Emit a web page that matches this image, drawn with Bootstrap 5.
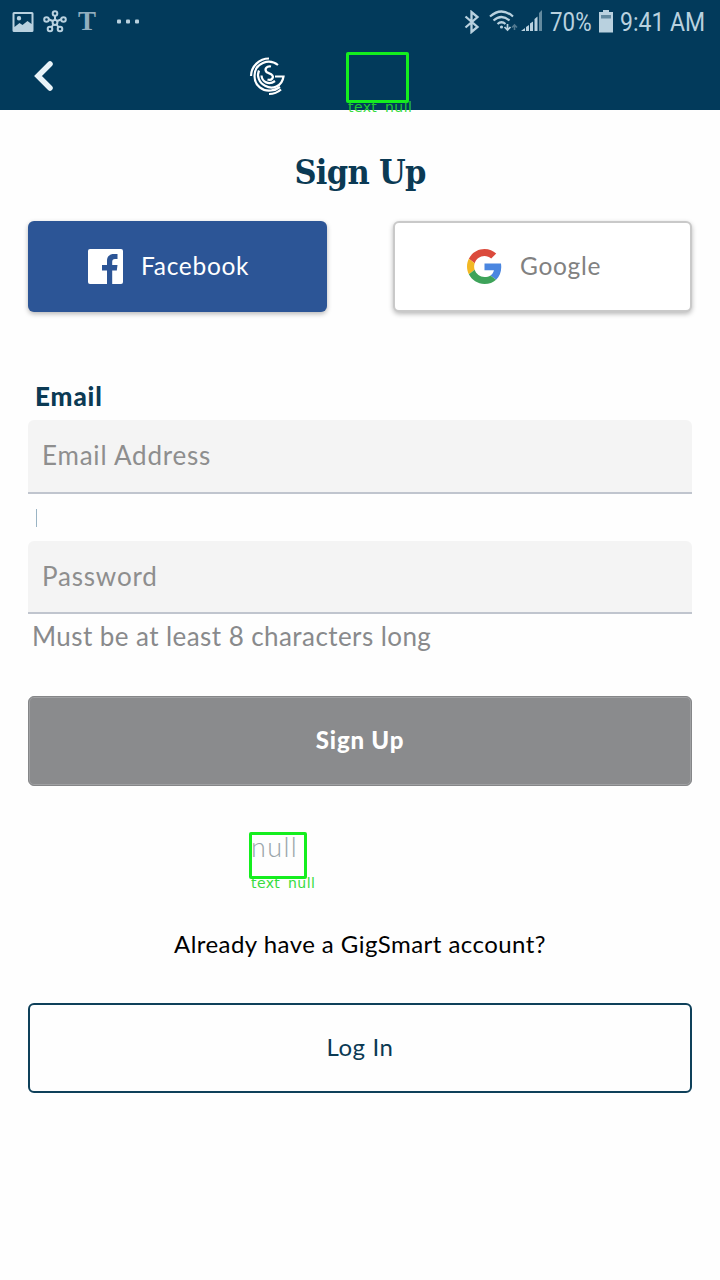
<!DOCTYPE html>
<html lang="en">
<head>
<meta charset="utf-8">
<meta name="viewport" content="width=device-width, initial-scale=1">
<title>Sign Up</title>
<link href="https://cdn.jsdelivr.net/npm/bootstrap@5.3.0/dist/css/bootstrap.min.css" rel="stylesheet">
<style>
  :root { --navy: #023a5b; --ink: #0b3a54; --muted: #898a8c; }
  body { font-family: Lato, "Open Sans", sans-serif; font-size: 24px; line-height: 30px; color: #000; background: #fefefe; min-height: 1280px; }
  .app-head { background: var(--navy); height: 110px; }
  .status-row { height: 44px; padding: 0 14px 0 12px; color: #b9d1df; font-family: Roboto, sans-serif; font-size: 26px; }
  .status-row svg, .title-row svg { display: block; flex: none; }
  .squeeze { display: block; transform-origin: left center; white-space: nowrap; flex: none; }
  .pct { width: 42px; transform: scaleX(.86); }
  .clock { width: 86px; transform: scaleX(.885); }
  .serif-t { margin-left: 10px; width: 20px; font: bold 27px/28px "Liberation Serif", serif; color: #92aebf; padding-bottom: 2px; }
  .title-row { height: 64px; padding-left: 34px; }
  .mark-box { position: relative; border: 3px solid #14ee1e; border-radius: 2px; flex: none; }
  .mark-tag { position: absolute; left: -1px; top: 100%; color: #22d92c; font: 400 14px/15px "DejaVu Sans", sans-serif; letter-spacing: .4px; word-spacing: 3px; white-space: pre; opacity: .9; }
  h1 { font: bold 34px/44px "DejaVu Serif", serif; font-stretch: condensed; letter-spacing: -.7px; color: var(--ink); margin: 40px 0 27px; text-align: center; }
  main { padding: 0 28px; }
  .btn-tall { height: 91px; font-size: 24px; border-radius: 6px; display: flex; align-items: center; justify-content: center; padding: 0 0 2px; }
  .social { width: 299px; box-shadow: 0 2px 5px rgba(0,0,0,.28); justify-content: flex-start; gap: 18px; padding-bottom: 0; }
  .social span { font-size: 24.5px; letter-spacing: .7px; }
  .fb, .fb:hover { background: #2c5596; color: #fff; border: 0; padding-left: 60px; }
  .goog, .goog:hover { background: #fff; color: #818181; border: 2px solid #c9c9c9; padding-left: 72px; }
  .field-label { color: var(--ink); font-weight: 900; font-size: 26px; letter-spacing: .9px; margin: 69px 0 9px 7px; display: block; }
  .field, .field:focus { height: 74px; background: #f4f4f4; border: 0; border-bottom: 2px solid #c0c5ce; border-radius: 6px 6px 0 0; font-size: 26px; letter-spacing: .8px; padding: 0 14px 3px; box-shadow: none; }
  .field-short, .field-short:focus { height: 73px; padding-bottom: 2px; }
  .field::placeholder { color: #8e8e8e; opacity: 1; }
  .gap-row { height: 47px; padding: 15px 0 0 8px; }
  .caret-line { width: 1px; height: 18px; background: #9ab4c4; }
  .hint { color: var(--muted); font-size: 26px; letter-spacing: .43px; margin: 7px 0 45px 4px; white-space: nowrap; }
  .submit, .submit:hover { height: 90px; background: #8a8b8d; color: #fff; border: 1px solid #858688; box-shadow: inset 0 0 0 1px #a0a1a3; font-weight: 900; letter-spacing: .8px; }
  .null-box { width: 58px; height: 47px; margin: 46px 0 0 221px; }
  .null-text { position: absolute; left: -1px; top: -3px; color: #9aa5aa; font-weight: 300; font-size: 27px; letter-spacing: 1.4px; }
  .already { margin: 50px 0 44px; text-align: center; white-space: nowrap; letter-spacing: .45px; }
  .login, .login:hover { height: 90px; background: #fefefe; color: var(--ink); border: 2px solid #0e405a; letter-spacing: .6px; }
</style>
</head>
<body>
<header class="app-head">
  <div class="status-row d-flex align-items-center">
    <svg width="22" height="20" viewBox="0 0 22 20"><path fill="#b9d1df" fill-rule="evenodd" d="M2 0h18q1.500 0 1.500 1.500v17q0 1.500-1.500 1.500H2q-1.500 0-1.500-1.500v-17Q.5 0 2 0zM2.500 2v13l5-4 3 2 5-4 4 3V2zM7 4a2.200 2.200 0 1 1 0 4.400a2.200 2.200 0 0 1 0-4.400z"/></svg>
    <svg style="margin-left:9px" width="25" height="24" viewBox="0 0 25 24" fill="none" stroke="#b9d1df" stroke-width="2"><path d="M12 12V5M12 12l-7-3M12 12l7-3M12 12l-4 6M12 12l4 6"/><g fill="#023a5b"><circle cx="12" cy="12.500" r="2.400"/><circle cx="12" cy="3.500" r="2.300"/><circle cx="3.500" cy="9.500" r="2.300"/><circle cx="20.500" cy="9.500" r="2.300"/><circle cx="7" cy="19" r="2.300"/><circle cx="17" cy="19" r="2.300"/></g></svg>
    <span class="serif-t">T</span>
    <svg style="margin-left:18px;margin-bottom:2px" width="24" height="5" viewBox="0 0 24 5" fill="#b9d1df"><rect x="1" y=".5" width="4" height="4" rx="1"/><rect x="10" y=".5" width="4" height="4" rx="1"/><rect x="19" y=".5" width="4" height="4" rx="1"/></svg>
    <svg class="ms-auto" width="16" height="24" viewBox="0 0 16 24" fill="none" stroke="#b9d1df" stroke-width="2.300"><path d="M1.500 6.500l12 10.500-6 5V2l6 5-12 10.500"/></svg>
    <svg style="margin-left:9px" width="29" height="24" viewBox="0 0 29 24" fill="none" stroke="#b9d1df" stroke-width="2.200"><path d="M1 6.500q11.500-10 23 0M4.500 10.500q8-7 16 0M8.500 14q4-3.500 8 0"/><circle cx="12.500" cy="17" r="1.600" fill="#b9d1df" stroke="none"/><path d="M18.500 14v6m-3-3l3 3 3-3" stroke-width="1.700"/><path d="M25.500 20v-5m-2.500 2.500l2.500-2.500 2.500 2.500" stroke="#50788f" stroke-width="1.600"/></svg>
    <svg style="margin-left:3px;margin-bottom:2px" width="22" height="22" viewBox="0 0 22 22" fill="#b9d1df"><path d="M0 21l4-3v3zM5 17l3-2v6H5zM9 13.500l3-2V21H9zM13.500 9l3-2.500V21h-3z"/><path d="M18 3l3-3v21h-3z" fill="#648a9f"/></svg>
    <span class="squeeze pct" style="margin-left:7px">70%</span>
    <svg style="margin-left:7px;margin-bottom:2px" width="14" height="23" viewBox="0 0 14 23"><path d="M4 0h6v2h4v20.500H0V2h4z" fill="#b9d1df"/><path d="M2 5h10v3.500H2z" fill="#62899f"/></svg>
    <span class="squeeze clock" style="margin-left:7px">9:41 AM</span>
  </div>
  <div class="title-row d-flex align-items-center">
    <svg width="20" height="32" viewBox="0 0 20 32" fill="none" stroke="#e9f3f8" stroke-width="5.500" stroke-linecap="round" stroke-linejoin="miter"><path d="M16 4L4 16l12 12"/></svg>
    <svg style="margin-left:195px" width="37" height="40" viewBox="0 0 37 40" fill="none" stroke="#fff" stroke-width="2.200"><path d="M2 20A18 18 0 0 1 20 2.500"/><path d="M29 9C20 2 5.500 7 5.500 20C5.500 30 14 35.500 22 34.500Q27 34 31 31"/><path d="M26 20.500H34.500C33 31 23 33.500 16.500 30C10 27 7.500 20 10 14.500"/><path d="M12.500 19.500C13 26 20 29.500 26 25"/><path d="M22 10.500C18 9.500 15 13 17.500 16L22.500 18.500C25.500 21 23 25 18.500 23.500"/><path d="M20 38Q27 38 32 33.500"/></svg>
    <div class="mark-box" style="width:63px;height:51px;margin-left:60px;margin-top:3px"><span class="mark-tag">text null</span></div>
  </div>
</header>
<main>
  <h1>Sign Up</h1>
  <div class="d-flex justify-content-between">
    <button class="btn btn-tall social fb" type="button">
      <svg width="35" height="35" viewBox="0 0 35 35"><rect width="35" height="35" rx="2" fill="#fff"/><path d="M19 35V21.500h-5V16h5v-4c0-5 3-7 7-7h3.500v5H27c-2 0-2.800 1-2.800 3v3h5.300l-.7 5.500h-4.600V35z" fill="#2c5596"/></svg>
      <span>Facebook</span>
    </button>
    <button class="btn btn-tall social goog" type="button">
      <svg width="35" height="35" viewBox="0 0 48 48"><path fill="#db4a3c" d="M24 9.500c3.540 0 6.710 1.220 9.210 3.600l6.850-6.850C35.900 2.380 30.470 0 24 0 14.620 0 6.510 5.380 2.560 13.220l7.980 6.190C12.430 13.720 17.740 9.500 24 9.500z"/><path fill="#4a86e0" d="M46.980 24.550c0-1.570-.15-3.090-.38-4.550H24v9.020h12.940c-.58 2.960-2.260 5.480-4.780 7.180l7.730 6c4.510-4.180 7.090-10.360 7.090-17.650z"/><path fill="#f2b824" d="M10.530 28.590c-.48-1.450-.76-2.990-.76-4.590s.27-3.140.76-4.590l-7.980-6.190C.92 16.460 0 20.120 0 24s.92 7.540 2.560 10.780z"/><path fill="#3ea35a" d="M24 48c6.480 0 11.930-2.130 15.890-5.810l-7.730-6c-2.150 1.450-4.920 2.300-8.160 2.300-6.260 0-11.570-4.220-13.470-9.910l-7.980 6.190C6.510 42.620 14.620 48 24 48z"/></svg>
      <span>Google</span>
    </button>
  </div>
  <label class="field-label" for="email">Email</label>
  <input class="form-control field" id="email" type="email" placeholder="Email Address">
  <div class="gap-row"><div class="caret-line"></div></div>
  <input class="form-control field field-short" id="password" type="password" placeholder="Password" aria-label="Password">
  <p class="hint">Must be at least 8 characters long</p>
  <button class="btn btn-tall submit w-100" type="button">Sign Up</button>
  <div class="mark-box null-box"><span class="null-text">null</span><span class="mark-tag">text null</span></div>
  <p class="already">Already have a GigSmart account?</p>
  <button class="btn btn-tall login w-100" type="button">Log In</button>
</main>
<script src="https://cdn.jsdelivr.net/npm/bootstrap@5.3.0/dist/js/bootstrap.bundle.min.js"></script>
</body>
</html>
